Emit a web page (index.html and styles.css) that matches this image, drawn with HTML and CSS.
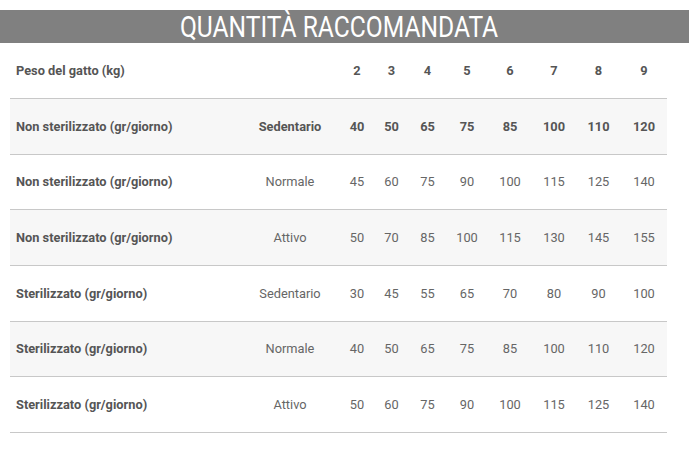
FILE: index.html
```html
<!DOCTYPE html>
<html lang="it">
<head>
<meta charset="utf-8">
<title>Quantità raccomandata</title>
<link rel="stylesheet" href="styles.css">
</head>
<body>
<div class="page">
  <h1 class="title"><span class="title-text">QUANTITÀ RACCOMANDATA</span></h1>
  <table class="qty">
    <colgroup>
      <col class="c-label"><col class="c-act">
      <col class="c-n1"><col class="c-n2"><col class="c-n3"><col class="c-n4">
      <col class="c-n5"><col class="c-n6"><col class="c-n7"><col class="c-n8">
    </colgroup>
    <thead>
      <tr class="head">
        <th class="label">Peso del gatto (kg)</th><th></th>
        <th>2</th><th>3</th><th>4</th><th>5</th><th>6</th><th>7</th><th>8</th><th>9</th>
      </tr>
    </thead>
    <tbody>
      <tr class="shade strong">
        <td class="label">Non sterilizzato (gr/giorno)</td><td>Sedentario</td>
        <td>40</td><td>50</td><td>65</td><td>75</td><td>85</td><td>100</td><td>110</td><td>120</td>
      </tr>
      <tr>
        <td class="label">Non sterilizzato (gr/giorno)</td><td>Normale</td>
        <td>45</td><td>60</td><td>75</td><td>90</td><td>100</td><td>115</td><td>125</td><td>140</td>
      </tr>
      <tr class="shade">
        <td class="label">Non sterilizzato (gr/giorno)</td><td>Attivo</td>
        <td>50</td><td>70</td><td>85</td><td>100</td><td>115</td><td>130</td><td>145</td><td>155</td>
      </tr>
      <tr>
        <td class="label">Sterilizzato (gr/giorno)</td><td>Sedentario</td>
        <td>30</td><td>45</td><td>55</td><td>65</td><td>70</td><td>80</td><td>90</td><td>100</td>
      </tr>
      <tr class="shade">
        <td class="label">Sterilizzato (gr/giorno)</td><td>Normale</td>
        <td>40</td><td>50</td><td>65</td><td>75</td><td>85</td><td>100</td><td>110</td><td>120</td>
      </tr>
      <tr>
        <td class="label">Sterilizzato (gr/giorno)</td><td>Attivo</td>
        <td>50</td><td>60</td><td>75</td><td>90</td><td>100</td><td>115</td><td>125</td><td>140</td>
      </tr>
    </tbody>
  </table>
</div>
</body>
</html>
```
FILE: styles.css
```css
html, body {
  margin: 0;
  padding: 0;
  background: #ffffff;
}
.page {
  padding-top: 10px;
  font-family: Roboto, "Liberation Sans", sans-serif;
}
.title {
  margin: 0;
  height: 33px;
  padding-right: 11px;
  background: #808080;
  color: #ffffff;
  font-weight: 400;
  font-size: 30px;
  line-height: 33px;
  text-align: center;
  white-space: nowrap;
}
.title-text {
  display: inline-block;
  transform: scaleX(0.82);
}
.qty {
  margin-left: 10px;
  width: 657px;
  table-layout: fixed;
  border-collapse: collapse;
  font-size: 12.8px;
  color: #666666;
}
.c-label { width: 230px; }
.c-act { width: 100px; }
.c-n1 { width: 34px; }
.c-n2 { width: 35px; }
.c-n3 { width: 37px; }
.c-n4 { width: 42px; }
.c-n5 { width: 44px; }
.c-n6 { width: 44px; }
.c-n7 { width: 45px; }
.c-n8 { width: 46px; }
.qty th, .qty td {
  padding: 0;
  text-align: center;
  border-bottom: 1px solid #c8c8c8;
  height: 54.67px;
}
.qty th {
  font-weight: 700;
  color: #555555;
}
.qty .head th {
  height: 55px;
}
.qty .label {
  text-align: left;
  padding-left: 6px;
  font-weight: 700;
  color: #555555;
}
.shade td {
  background: #f7f7f7;
}
.strong td {
  font-weight: 700;
  color: #555555;
}
```
